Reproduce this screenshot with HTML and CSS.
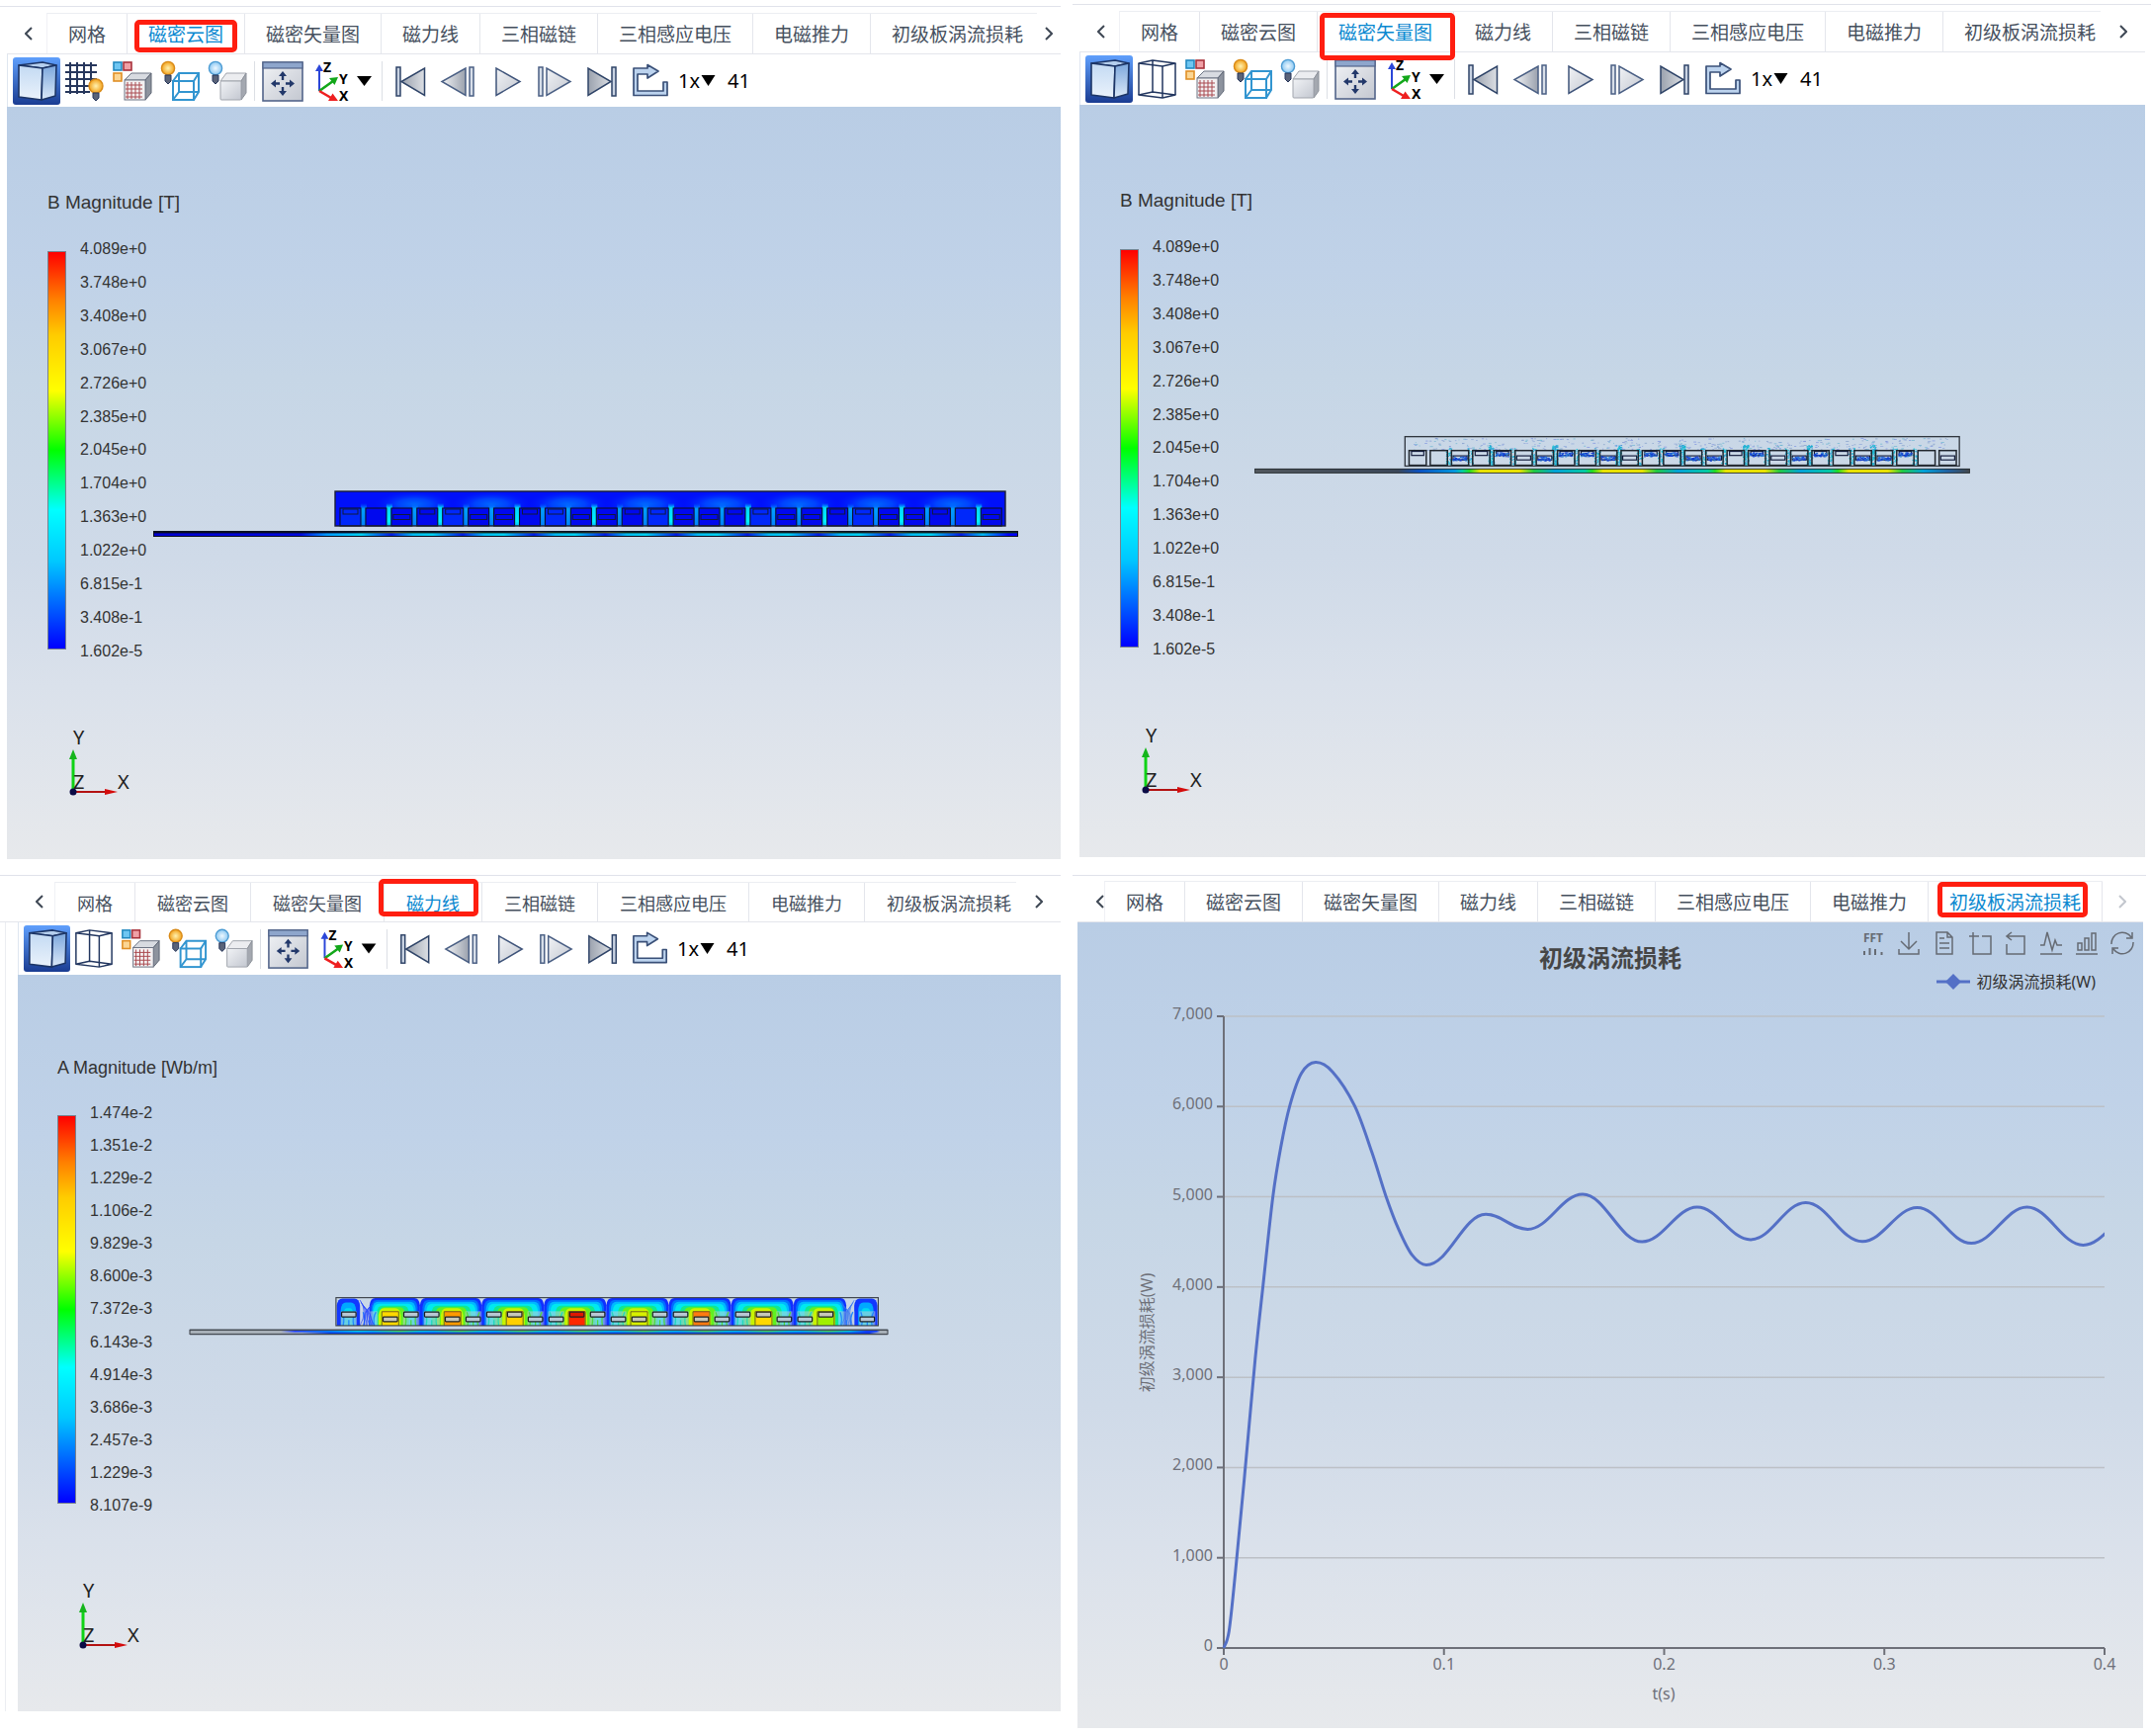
FILE: index.html
```html
<!DOCTYPE html>
<html lang="zh-CN">
<head>
<meta charset="utf-8">
<meta name="viewport" content="width=device-width, initial-scale=1">
<title>电磁仿真结果</title>
<link rel="stylesheet" href="styles.css">
</head>
<body>
<svg class="sprite" aria-hidden="true">
  <defs>
    <linearGradient id="face" x1="0" y1="0" x2="0" y2="1"><stop offset="0" stop-color="#c3daf3"/><stop offset="1" stop-color="#eaf2fb"/></linearGradient>
    <linearGradient id="side" x1="0" y1="0" x2="0" y2="1"><stop offset="0" stop-color="#7ba6dc"/><stop offset="1" stop-color="#dbe9f8"/></linearGradient>
    <linearGradient id="gray" x1="0" y1="0" x2="1" y2="1"><stop offset="0" stop-color="#f1f3f6"/><stop offset="1" stop-color="#c3c7d0"/></linearGradient>
    <linearGradient id="steel" x1="0" y1="0" x2="1" y2="0"><stop offset="0" stop-color="#f4f5f7"/><stop offset="1" stop-color="#9aa1ad"/></linearGradient>
    <linearGradient id="steel-r" x1="0" y1="0" x2="1" y2="0"><stop offset="0" stop-color="#9aa1ad"/><stop offset="1" stop-color="#dcdfe4"/></linearGradient>
    <radialGradient id="amber"><stop offset="0" stop-color="#fff2b0"/><stop offset="1" stop-color="#f2a21c"/></radialGradient>
    <radialGradient id="azure"><stop offset="0" stop-color="#eef8ff"/><stop offset="1" stop-color="#8cc8f2"/></radialGradient>
  </defs>
  <symbol id="i-solid" viewBox="0 0 48 48">
    <g stroke="#1c3566" stroke-width="1.6" stroke-linejoin="round">
      <path d="M6 8 30 5 44 8 30 11Z" fill="#b5cfee"/>
      <path d="M6 8 30 11 29 43 6 40Z" fill="url(#face)"/>
      <path d="M30 11 44 8 43 39 29 43Z" fill="url(#side)"/>
    </g>
  </symbol>
  <symbol id="i-frame" viewBox="0 0 48 48">
    <g fill="none" stroke="#22365f" stroke-width="1.5" stroke-linejoin="round">
      <path d="M6 8 20 5 43 8 30 11Z"/><path d="M6 40 20 37 43 40 30 43Z"/>
      <path d="M6 8V40M20 5V37M43 8V40M30 11V43"/>
    </g>
  </symbol>
  <symbol id="i-grid" viewBox="0 0 48 48">
    <path d="M10 5V37M17 5V37M24 5V37M31 5V31M5 8H37M5 15H37M5 22H37M5 29H31M5 35H30" fill="none" stroke="#27375c" stroke-width="2"/>
    <circle cx="36" cy="29" r="7" fill="url(#amber)" stroke="#d98a17" stroke-width="1.4"/>
    <path d="M33 36H39V41L36 44 33 41Z" fill="#5a6378" stroke="#27375c"/>
  </symbol>
  <symbol id="i-mesh" viewBox="0 0 48 48">
    <rect x="6" y="5" width="8" height="8" fill="#6fc6f2" stroke="#2389c0" stroke-width="1.6"/>
    <rect x="16" y="5" width="8" height="8" fill="#f0a0a6" stroke="#a8333c" stroke-width="1.6"/>
    <rect x="6" y="16" width="8" height="8" fill="#fbd694" stroke="#e08f26" stroke-width="1.6"/>
    <path d="M17 23 24 16H44L38 23Z" fill="#d8dbe1" stroke="#6c7484"/>
    <path d="M38 23 44 16V36L38 43Z" fill="#8d939e" stroke="#5e6675"/>
    <rect x="17" y="23" width="21" height="20" fill="#f3f0f1" stroke="#6c7484"/>
    <path d="M20 25V42M24 25V42M28 25V42M32 25V42M18 28H35M18 32H35M18 36H35M18 40H35" stroke="#a94a50" fill="none"/>
  </symbol>
  <symbol id="i-edges" viewBox="0 0 48 48">
    <circle cx="13" cy="11" r="6.6" fill="url(#amber)" stroke="#d98a17" stroke-width="1.4"/>
    <path d="M10 18H16V24L13 27 10 24Z" fill="#5a6378" stroke="#27375c"/>
    <g fill="none" stroke="#3295d0" stroke-width="2"><rect x="18" y="24" width="21" height="19"/><path d="M18 24 24 16H44V35L39 43M39 24 44 16M24 16V35H44M24 35 18 43"/></g>
  </symbol>
  <symbol id="i-box" viewBox="0 0 48 48">
    <circle cx="13" cy="11" r="6.6" fill="url(#azure)" stroke="#4b9bd3" stroke-width="1.4"/>
    <path d="M10 18H16V24L13 27 10 24Z" fill="#5a6378" stroke="#27375c"/>
    <path d="M18 24 24 16H44L39 24Z" fill="#ecedf0" stroke="#a0a4ac"/>
    <path d="M39 24 44 16V36L39 43Z" fill="#a4a8b0" stroke="#8d929b"/>
    <rect x="18" y="24" width="21" height="19" rx="1" fill="url(#gray)" stroke="#a0a4ac"/>
  </symbol>
  <symbol id="i-fit" viewBox="0 0 48 48">
    <rect x="4" y="5" width="40" height="39" fill="url(#gray)" stroke="#53658a" stroke-width="1.6"/>
    <rect x="4" y="5" width="40" height="6" fill="#8ea6cc" stroke="#53658a" stroke-width="1.2"/>
    <path d="M24 14 28 19H25.200V23H22.800V19H20ZM24 39 28 34H25.200V30H22.800V34H20ZM12 26.500 17 22.500V25.300H21V27.700H17V30.500ZM36 26.500 31 22.500V25.300H27V27.700H31V30.500Z" fill="#22386a"/>
  </symbol>
  <symbol id="i-axes" viewBox="0 0 72 48">
    <path d="M13 34V12" stroke="#2b46d8" stroke-width="2"/><path d="M9 14 13 7 17 14Z" fill="#2b46d8"/>
    <path d="M13 34 27 24" stroke="#12a71a" stroke-width="2.600"/><path d="M32 20 28.500 28 23 21Z" fill="#12a71a"/>
    <path d="M13 34 25 41" stroke="#ee2020" stroke-width="2.600"/><path d="M32 44 22 44 26.500 36.500Z" fill="#ee2020"/>
    <path d="M51 19H66L58.500 29Z"/>
  </symbol>
  <symbol id="i-first" viewBox="0 0 48 48"><g stroke="#2f4468" stroke-width="1.5"><rect x="10" y="10" width="4" height="29" fill="#c9d3e2"/><path d="M38.500 11V38.500L15 24.500Z" fill="url(#steel-r)"/></g></symbol>
  <symbol id="i-prev" viewBox="0 0 48 48"><g stroke="#4a5f84" stroke-width="1.5"><path d="M31 11V38.500L7 24.500Z" fill="url(#steel)"/><rect x="35" y="10" width="4" height="29" fill="#d8dfe9"/></g></symbol>
  <symbol id="i-play" viewBox="0 0 48 48"><path d="M13 11V38.500L37 24.500Z" fill="url(#gray)" stroke="#3f547a" stroke-width="1.5"/></symbol>
  <symbol id="i-next" viewBox="0 0 48 48"><g stroke="#4a5f84" stroke-width="1.5"><rect x="7" y="10" width="4" height="29" fill="#d8dfe9"/><path d="M15 11V38.500L39 24.500Z" fill="url(#gray)"/></g></symbol>
  <symbol id="i-last" viewBox="0 0 48 48"><g stroke="#2f4468" stroke-width="1.500"><path d="M8 11V38.500L31 24.500Z" fill="url(#steel-r)"/><rect x="32" y="10" width="4" height="29" fill="#c9d3e2"/></g></symbol>
  <symbol id="i-loop" viewBox="0 0 48 48"><path d="M19 11V7.500L30 14 19 21V17H9V34H35V25H39V38.500H5V11Z" fill="#bcd3ee" stroke="#3a5078" stroke-width="1.700" stroke-linejoin="round"/></symbol>

  <symbol id="t-save" viewBox="0 0 24 24"><path d="M12 1V18M4 10 12 18 20 10M2 18V23H22V18"/></symbol>
  <symbol id="t-data" viewBox="0 0 24 24"><path d="M4 1H15L20 6V23H4ZM15 1V6H20M7 7H12M7 12H17M7 17H17"/></symbol>
  <symbol id="t-zoom" viewBox="0 0 24 24"><path d="M1 5H11M5 1V23H23V5H14"/></symbol>
  <symbol id="t-back" viewBox="0 0 24 24"><path d="M8 1 3 5 8 9M3 5H21V23H3V13"/></symbol>
  <symbol id="t-line" viewBox="0 0 24 24"><path d="M1 14H5L8 1 13 19 16 9 18 14H23M1 23H23"/></symbol>
  <symbol id="t-bar" viewBox="0 0 24 24"><path d="M3 12H7V19H3ZM10 7H14V19H10ZM17 2H21V19H17ZM1 23H23"/></symbol>
  <symbol id="t-reset" viewBox="0 0 24 24"><path d="M1 13A11 11 0 0 1 21 6M22 1V7H16M23 11A11 11 0 0 1 3 18M2 23V17H8"/></symbol>

  <symbol id="i-triad" viewBox="0 0 80 80">
    <path d="M15 69V34" stroke="#0fd316" stroke-width="3"/><path d="M11 36 15 26 19 36Z" fill="#15b51c"/>
    <path d="M15 69H50" stroke="#b31212" stroke-width="2"/><path d="M47 66 60 69 47 72Z" fill="#d40c0c"/>
    <circle cx="15" cy="69" r="3.500" fill="#0b0b46"/>
  </symbol>
</svg>

<main class="board">
  <section class="panel panel-cloud">
    <nav class="tabs">
      <button class="scroll prev" aria-label="向左"><svg viewBox="0 0 8 14"><path d="M7 1 1 7 7 13"/></svg></button>
      <div class="tab-list">
        <button class="tab">网格</button><button class="tab active">磁密云图<span class="mark"></span></button><button class="tab">磁密矢量图</button><button class="tab">磁力线</button><button class="tab">三相磁链</button><button class="tab">三相感应电压</button><button class="tab">电磁推力</button><button class="tab">初级板涡流损耗</button>
      </div>
      <button class="scroll next" aria-label="向右"><svg viewBox="0 0 8 14"><path d="M1 1 7 7 1 13"/></svg></button>
    </nav>
    <div class="toolbar">
      <button class="tool on" aria-label="实体"><svg><use href="#i-solid"/></svg></button>
      <button class="tool" aria-label="网格显示"><svg><use href="#i-grid"/></svg></button>
      <button class="tool" aria-label="网格着色"><svg><use href="#i-mesh"/></svg></button>
      <button class="tool" aria-label="显示边线"><svg><use href="#i-edges"/></svg></button>
      <button class="tool" aria-label="显示实体"><svg><use href="#i-box"/></svg></button>
      <span class="rule"></span>
      <button class="tool" aria-label="适应窗口"><svg><use href="#i-fit"/></svg></button>
      <button class="tool wide" aria-label="视图方向"><svg class="axes" viewBox="0 0 72 48"><use href="#i-axes"/><text x="17" y="15">Z</text><text x="33" y="27">Y</text><text x="33" y="44">X</text></svg></button>
      <span class="rule"></span>
      <div class="player">
        <button class="tool" aria-label="第一帧"><svg><use href="#i-first"/></svg></button>
        <button class="tool" aria-label="上一帧"><svg><use href="#i-prev"/></svg></button>
        <button class="tool" aria-label="播放"><svg><use href="#i-play"/></svg></button>
        <button class="tool" aria-label="下一帧"><svg><use href="#i-next"/></svg></button>
        <button class="tool" aria-label="最后一帧"><svg><use href="#i-last"/></svg></button>
        <button class="tool" aria-label="循环"><svg><use href="#i-loop"/></svg></button>
      </div>
      <label class="speed"><select aria-label="速度"><option>1x</option></select><svg viewBox="0 0 14 11"><path d="M0 0H14L7 11Z"/></svg></label>
      <output class="frame">41</output>
    </div>
    <div class="stage">
      <h2 class="quantity">B Magnitude [T]</h2>
      <div class="legend">
        <div class="ramp"></div>
        <ol class="levels"><li>4.089e+0</li><li>3.748e+0</li><li>3.408e+0</li><li>3.067e+0</li><li>2.726e+0</li><li>2.385e+0</li><li>2.045e+0</li><li>1.704e+0</li><li>1.363e+0</li><li>1.022e+0</li><li>6.815e-1</li><li>3.408e-1</li><li>1.602e-5</li></ol>
      </div>
      <svg class="model" data-kind="cloud" viewBox="0 -1 875 50"></svg>
      <svg class="triad" viewBox="0 0 80 80"><use href="#i-triad"/><text x="15" y="21">Y</text><text x="15" y="66">Z</text><text x="60" y="66">X</text></svg>
    </div>
  </section>

  <section class="panel panel-vector">
    <nav class="tabs">
      <button class="scroll prev" aria-label="向左"><svg viewBox="0 0 8 14"><path d="M7 1 1 7 7 13"/></svg></button>
      <div class="tab-list">
        <button class="tab">网格</button><button class="tab">磁密云图</button><button class="tab active">磁密矢量图<span class="mark"></span></button><button class="tab">磁力线</button><button class="tab">三相磁链</button><button class="tab">三相感应电压</button><button class="tab">电磁推力</button><button class="tab">初级板涡流损耗</button>
      </div>
      <button class="scroll next" aria-label="向右"><svg viewBox="0 0 8 14"><path d="M1 1 7 7 1 13"/></svg></button>
    </nav>
    <div class="toolbar">
      <button class="tool on" aria-label="实体"><svg><use href="#i-solid"/></svg></button>
      <button class="tool" aria-label="线框"><svg><use href="#i-frame"/></svg></button>
      <button class="tool" aria-label="网格着色"><svg><use href="#i-mesh"/></svg></button>
      <button class="tool" aria-label="显示边线"><svg><use href="#i-edges"/></svg></button>
      <button class="tool" aria-label="显示实体"><svg><use href="#i-box"/></svg></button>
      <span class="rule"></span>
      <button class="tool" aria-label="适应窗口"><svg><use href="#i-fit"/></svg></button>
      <button class="tool wide" aria-label="视图方向"><svg class="axes" viewBox="0 0 72 48"><use href="#i-axes"/><text x="17" y="15">Z</text><text x="33" y="27">Y</text><text x="33" y="44">X</text></svg></button>
      <span class="rule"></span>
      <div class="player">
        <button class="tool" aria-label="第一帧"><svg><use href="#i-first"/></svg></button>
        <button class="tool" aria-label="上一帧"><svg><use href="#i-prev"/></svg></button>
        <button class="tool" aria-label="播放"><svg><use href="#i-play"/></svg></button>
        <button class="tool" aria-label="下一帧"><svg><use href="#i-next"/></svg></button>
        <button class="tool" aria-label="最后一帧"><svg><use href="#i-last"/></svg></button>
        <button class="tool" aria-label="循环"><svg><use href="#i-loop"/></svg></button>
      </div>
      <label class="speed"><select aria-label="速度"><option>1x</option></select><svg viewBox="0 0 14 11"><path d="M0 0H14L7 11Z"/></svg></label>
      <output class="frame">41</output>
    </div>
    <div class="stage">
      <h2 class="quantity">B Magnitude [T]</h2>
      <div class="legend">
        <div class="ramp"></div>
        <ol class="levels"><li>4.089e+0</li><li>3.748e+0</li><li>3.408e+0</li><li>3.067e+0</li><li>2.726e+0</li><li>2.385e+0</li><li>2.045e+0</li><li>1.704e+0</li><li>1.363e+0</li><li>1.022e+0</li><li>6.815e-1</li><li>3.408e-1</li><li>1.602e-5</li></ol>
      </div>
      <svg class="model" data-kind="vector" viewBox="0 -1 875 50"></svg>
      <svg class="triad" viewBox="0 0 80 80"><use href="#i-triad"/><text x="15" y="21">Y</text><text x="15" y="66">Z</text><text x="60" y="66">X</text></svg>
    </div>
  </section>

  <section class="panel panel-lines">
    <nav class="tabs">
      <button class="scroll prev" aria-label="向左"><svg viewBox="0 0 8 14"><path d="M7 1 1 7 7 13"/></svg></button>
      <div class="tab-list">
        <button class="tab">网格</button><button class="tab">磁密云图</button><button class="tab">磁密矢量图</button><button class="tab active">磁力线<span class="mark"></span></button><button class="tab">三相磁链</button><button class="tab">三相感应电压</button><button class="tab">电磁推力</button><button class="tab">初级板涡流损耗</button>
      </div>
      <button class="scroll next" aria-label="向右"><svg viewBox="0 0 8 14"><path d="M1 1 7 7 1 13"/></svg></button>
    </nav>
    <div class="framed">
      <div class="toolbar">
        <button class="tool on" aria-label="实体"><svg><use href="#i-solid"/></svg></button>
        <button class="tool" aria-label="线框"><svg><use href="#i-frame"/></svg></button>
        <button class="tool" aria-label="网格着色"><svg><use href="#i-mesh"/></svg></button>
        <button class="tool" aria-label="显示边线"><svg><use href="#i-edges"/></svg></button>
        <button class="tool" aria-label="显示实体"><svg><use href="#i-box"/></svg></button>
        <span class="rule"></span>
        <button class="tool" aria-label="适应窗口"><svg><use href="#i-fit"/></svg></button>
        <button class="tool wide" aria-label="视图方向"><svg class="axes" viewBox="0 0 72 48"><use href="#i-axes"/><text x="17" y="15">Z</text><text x="33" y="27">Y</text><text x="33" y="44">X</text></svg></button>
        <span class="rule"></span>
        <div class="player">
          <button class="tool" aria-label="第一帧"><svg><use href="#i-first"/></svg></button>
          <button class="tool" aria-label="上一帧"><svg><use href="#i-prev"/></svg></button>
          <button class="tool" aria-label="播放"><svg><use href="#i-play"/></svg></button>
          <button class="tool" aria-label="下一帧"><svg><use href="#i-next"/></svg></button>
          <button class="tool" aria-label="最后一帧"><svg><use href="#i-last"/></svg></button>
          <button class="tool" aria-label="循环"><svg><use href="#i-loop"/></svg></button>
        </div>
        <label class="speed"><select aria-label="速度"><option>1x</option></select><svg viewBox="0 0 14 11"><path d="M0 0H14L7 11Z"/></svg></label>
        <output class="frame">41</output>
      </div>
      <div class="stage">
        <h2 class="quantity">A Magnitude [Wb/m]</h2>
        <div class="legend">
          <div class="ramp"></div>
          <ol class="levels"><li>1.474e-2</li><li>1.351e-2</li><li>1.229e-2</li><li>1.106e-2</li><li>9.829e-3</li><li>8.600e-3</li><li>7.372e-3</li><li>6.143e-3</li><li>4.914e-3</li><li>3.686e-3</li><li>2.457e-3</li><li>1.229e-3</li><li>8.107e-9</li></ol>
        </div>
        <svg class="model" data-kind="lines" viewBox="0 -1 875 50"></svg>
        <svg class="triad" viewBox="0 0 80 80"><use href="#i-triad"/><text x="15" y="21">Y</text><text x="15" y="66">Z</text><text x="60" y="66">X</text></svg>
      </div>
    </div>
  </section>

  <section class="panel panel-loss">
    <nav class="tabs">
      <button class="scroll prev" aria-label="向左"><svg viewBox="0 0 8 14"><path d="M7 1 1 7 7 13"/></svg></button>
      <div class="tab-list">
        <button class="tab">网格</button><button class="tab">磁密云图</button><button class="tab">磁密矢量图</button><button class="tab">磁力线</button><button class="tab">三相磁链</button><button class="tab">三相感应电压</button><button class="tab">电磁推力</button><button class="tab active">初级板涡流损耗<span class="mark"></span></button>
      </div>
      <button class="scroll next" aria-label="向右" disabled><svg viewBox="0 0 8 14"><path d="M1 1 7 7 1 13"/></svg></button>
    </nav>
    <div class="chart">
      <header class="chart-head">
        <h2 class="chart-title">初级涡流损耗</h2>
        <div class="chart-side">
          <div class="toolbox">
            <button class="fft"><span>FFT</span><svg viewBox="0 0 24 8" aria-hidden="true"><path d="M3 8V4M8.500 8V1M14 8V2M20.500 8V5" stroke-width="2"/></svg></button>
            <button aria-label="保存"><svg><use href="#t-save"/></svg></button>
            <button aria-label="数据"><svg><use href="#t-data"/></svg></button>
            <button aria-label="区域缩放"><svg><use href="#t-zoom"/></svg></button>
            <button aria-label="缩放还原"><svg><use href="#t-back"/></svg></button>
            <button aria-label="折线图"><svg><use href="#t-line"/></svg></button>
            <button aria-label="柱状图"><svg><use href="#t-bar"/></svg></button>
            <button aria-label="还原"><svg><use href="#t-reset"/></svg></button>
          </div>
          <div class="series"><svg viewBox="0 0 34 16"><path d="M0 8H34" stroke="#5470c6" stroke-width="3"/><path d="M17 0 25 8 17 16 9 8Z" fill="#5470c6"/></svg>初级涡流损耗(W)</div>
        </div>
      </header>
      <svg class="plot" viewBox="0 80 1078 735"></svg>
    </div>
  </section>
</main>
<script src="app.js"></script>
</body>
</html>
```

FILE: styles.css
```css
* { box-sizing: border-box; }

body {
  margin: 0;
  background: #fff;
  font-family: "Noto Sans", "Noto Sans CJK SC", sans-serif;
  color: #46505e;
}

button, select { font: inherit; color: inherit; background: none; border: 0; padding: 0; margin: 0; }
h2, ol { margin: 0; padding: 0; list-style: none; }
.sprite { position: absolute; width: 0; height: 0; }

.board {
  display: grid;
  grid-template-columns: minmax(0, 1073fr) minmax(0, 1091fr);
  column-gap: 12px;
  row-gap: 16px;
  align-items: start;
}

.panel {
  --tab-size: 19px;
  --tool: 48px;
  --scale-height: 427px;
  border-top: 1px solid #e0e2ea;
  padding: 6px 0 0 7px;
  margin-top: 6px;
}
.panel-vector { margin-top: 4px; padding: 6px 6px 0 7px; }
.panel-lines { --tab-size: 18px; --tool: 47px; --scale-height: 417px; margin-top: 0; padding: 6px 0 0; }
.panel-loss { margin: 0 5px 0 0; padding: 5px 3px 0 5px; }

/* tabs */
.tabs { display: flex; height: 42px; border-bottom: 1px solid #e4e6ec; }
.tab-list { display: flex; flex: 1; min-width: 0; border-top: 1px solid #eceef2; border-left: 1px solid #f0f1f5; }
.tab {
  position: relative;
  flex: none;
  padding: 0 21px;
  border-right: 1px solid #e4e6ec;
  font-family: "Noto Sans CJK SC", sans-serif;
  font-size: var(--tab-size);
  line-height: 40px;
  white-space: nowrap;
}
.tab:last-child { flex: 0 1 auto; min-width: 0; border-right-color: transparent; padding-right: 0; }
.tab.active { color: #0a88d0; }
.mark { position: absolute; inset: 6px 7px 1px 7px; border: 5px solid #ff1e10; border-radius: 5px; }
.panel-cloud .tab { line-height: 38px; }
.panel-vector .mark { inset: 1px -2px -9px 2px; z-index: 1; }
.panel-lines .mark { inset: -4px 3px 5px -6px; }
.panel-loss .mark { inset: 0 14px 4px 9px; }
.panel-lines .tabs { padding-left: 18px; height: 41px; }
.panel-lines .tab { line-height: 38px; padding-left: 22px; padding-right: 22px; }
.panel-loss .tab.active { padding-right: 21px; border-right-color: #e4e6ec; }
.panel-loss .tab-list { flex: 0 1 auto; }

.scroll { display: grid; place-items: center; flex: none; width: 40px; }
.scroll svg { width: 8px; height: 14px; fill: none; stroke: #3f4855; stroke-width: 2; }
.scroll.prev { padding-left: 4px; }
.panel-cloud .next { width: 24px; }
.panel-vector .next, .panel-lines .next { width: 45px; }
.panel-lines .prev { width: 37px; padding-left: 6px; }
.panel-loss .prev { width: 27px; justify-items: end; }
.scroll:disabled svg { stroke: #c3c7ce; }

/* view toolbar */
.toolbar { display: flex; align-items: center; height: 53px; padding-left: 5px; border-left: 1px solid #dfe6f0; }
.tool { flex: none; width: var(--tool); height: var(--tool); border-radius: 3px; }
.tool svg { display: block; width: 100%; height: 100%; }
.tool.wide { width: 72px; }
.tool.on { background: linear-gradient(#5f9ffc, #1a3c92); }
.rule { width: 1px; height: 40px; margin: 0 4px; background: #dcdfe5; }
.player { display: flex; gap: 1px; }
.axes text { font: bold 14px "Noto Sans", sans-serif; }
.speed { display: flex; align-items: center; margin-left: 2px; color: #000; font-size: 20px; }
.speed select { appearance: none; width: 23px; }
.speed svg { width: 15px; height: 11px; }
.frame { margin-left: 12px; font-size: 20px; color: #000; }

/* 3D view */
.stage, .chart {
  background: linear-gradient(#b9cde5, #c0d2e8 22%, #c6d6e6 36%, #cfdae8 60%, #dae1eb 77%, #e7e9ec);
}
.stage {
  display: grid;
  grid-template-columns: 107px minmax(0, 1fr);
  padding: 85px 0 57px 41px;
}
.framed { margin-left: 5px; padding-left: 12px; border-left: 1px solid #eceef2; }
.quantity { grid-column: 1 / -1; margin-bottom: 25px; font: 19px/24px "Liberation Sans", sans-serif; color: #333; }
.panel-lines .quantity { font-size: 18px; margin-bottom: 24px; }
.panel-lines .stage { padding: 82px 0 56px 40px; }
.legend { display: flex; gap: 14px; height: var(--scale-height); }
.ramp {
  width: 19px;
  margin: 12px 0;
  border: 1px solid #77808e;
  background: linear-gradient(#f00, #ff8000 12%, #fc0 21%, #ff0 35%, #0f0 50%, #0ff 65%, #00c8ff 78%, #00f);
}
.levels {
  display: flex;
  flex-direction: column;
  justify-content: space-between;
  font: 16px/20px "Liberation Sans", sans-serif;
  color: #333;
}
.model { display: block; width: 100%; padding: 253px 43px 0 0; overflow: visible; }
.panel-vector .model { padding: 200px 177px 0 29px; }
.panel-lines .model { padding: 195px 174px 0 26px; }
.triad { grid-column: 1; width: 80px; height: 80px; margin: 63px 0 0 11px; }
.panel-lines .triad { margin-top: 62px; }
.triad text { font: 20px "Noto Sans", sans-serif; fill: #222; }

/* loss chart */
.chart-head { display: grid; grid-template-columns: 1fr auto 1fr; height: 80px; }
.chart-title { grid-column: 2; margin-top: 17px; font: bold 24px/36px "Noto Sans CJK SC", sans-serif; color: #464646; }
.chart-side { display: flex; flex-direction: column; align-items: flex-end; gap: 15px; padding: 9px 3px 0 0; }
.toolbox { display: flex; color: #666b73; }
.toolbox button { display: grid; place-items: center; width: 36px; height: 24px; }
.toolbox svg { width: 24px; height: 24px; fill: none; stroke: currentColor; stroke-width: 1.5; }
.toolbox .fft { align-content: space-between; font: bold 12px/14px "Noto Sans", sans-serif; }
.toolbox .fft svg { height: 8px; }
.series { display: flex; align-items: center; gap: 7px; margin-right: 45px; font-size: 16px; line-height: 24px; color: #333; }
.series svg { width: 34px; height: 16px; }
.plot { display: block; width: 100%; font-size: 16px; fill: #6e7079; }
.plot .grid { stroke: #bcc0c6; stroke-width: 1.5; }
.plot .axis { stroke: #6e7079; stroke-width: 2; }
.plot .curve { fill: none; stroke: #5470c6; stroke-width: 3; stroke-linejoin: round; }
```

FILE: app.js
```js
const NS = 'http://www.w3.org/2000/svg';
const add = (parent, name, attrs, text) => {
  const el = document.createElementNS(NS, name);
  for (const k in attrs) el.setAttribute(k, attrs[k]);
  if (text !== undefined) el.textContent = text;
  parent.appendChild(el);
  return el;
};

// repeatable noise for the field arrows
let seed = 7;
const rnd = () => (seed = (seed * 16807) % 2147483647) / 2147483647;

// Coil position in each of the 26 slots: t = upper, m = lower, n = empty
const COILS = 'tnmttmmttmmttmmttmmttmmtnm';
const PITCH = 25.93;
const slotX = i => 189 + PITCH * i;

function gradient(svg, id, stops, vertical) {
  const g = add(svg, 'linearGradient', { id, x1: 0, y1: 0, x2: vertical ? 0 : 1, y2: vertical ? 1 : 0 });
  stops.forEach(([o, c, a = 1]) => add(g, 'stop', { offset: o, 'stop-color': c, 'stop-opacity': a }));
}

function slots(svg, style, coilWidth = 1) {
  [...COILS].forEach((c, i) => {
    const x = slotX(i);
    add(svg, 'rect', { x, y: 18, width: 21, height: 18, ...style(i) });
    if (c !== 'n') add(svg, 'rect', {
      x: x + (c === 't' ? 3 : 2), y: c === 't' ? 19 : 24.5,
      width: c === 't' ? 15 : 17, height: 5, fill: 'none', stroke: '#111a3a', 'stroke-width': coilWidth
    });
  });
}

function cloud(svg) {
  gradient(svg, 'tooth-hi', [[0, '#0af', 0], [.2, '#00d8ff'], [.8, '#00f0ff'], [1, '#0bf']], true);
  gradient(svg, 'tooth-lo', [[0, '#05f', 0], [.25, '#00a0ff'], [1, '#0080ff']], true);
  const glow = add(svg, 'radialGradient', { id: 'yoke' });
  add(glow, 'stop', { offset: 0, 'stop-color': '#0068ff' });
  add(glow, 'stop', { offset: .4, 'stop-color': '#0050ff', 'stop-opacity': .8 });
  add(glow, 'stop', { offset: 1, 'stop-color': '#0010ff', 'stop-opacity': 0 });
  add(svg, 'rect', { x: 184, y: 1, width: 678, height: 35, fill: '#0010fa' });
  for (let i = 2.9; i < 25; i += 3) add(svg, 'ellipse', { cx: slotX(i), cy: 14, rx: 42, ry: 14, fill: 'url(#yoke)' });
  for (let i = 1; i < 26; i++) {
    const hot = i % 3 === 1 && i > 1 || i === 2;
    add(svg, 'rect', { x: slotX(i) - 5, y: 13, width: 6, height: 23, fill: hot ? 'url(#tooth-hi)' : 'url(#tooth-lo)' });
  }
  slots(svg, i => ({ fill: i % 4 === 0 ? '#0028fa' : '#0008ee', stroke: '#0a1030', 'stroke-width': 1.1 }));
  add(svg, 'rect', { x: 184, y: 1, width: 678, height: 35, fill: 'none', stroke: '#1a1f33', 'stroke-width': 1.4 });
  const top = [[0, '#0a0a20'], [.23, '#0a1030']], low = [[0, '#0000d0'], [.17, '#0008e0'], [.2, '#09f']];
  for (let k = 0; k < 9; k++) {
    const o = .24 + k * .0825;
    top.push([o, '#10262a'], [o + .04, '#6b6a12'], [o + .06, '#10401e']);
    low.push([o, '#00d0f0'], [o + .035, '#0018e0'], [o + .06, '#00b8f0']);
  }
  low.push([.99, '#0000ff']);
  gradient(svg, 'plate-top', top);
  gradient(svg, 'plate-low', low);
  add(svg, 'rect', { x: 0, y: 41, width: 875, height: 6, fill: '#0a1020' });
  add(svg, 'rect', { x: 1, y: 42.4, width: 873, height: 1.4, fill: 'url(#plate-top)' });
  add(svg, 'rect', { x: 1, y: 43.4, width: 873, height: 2.6, fill: 'url(#plate-low)' });
}

function vector(svg) {
  const dot = (x, y, w, fill, h = 1) => add(svg, 'rect', { x, y, width: w, height: h, fill });
  for (let i = 0; i < 420; i++) {
    const y = 3 + rnd() * 15;
    dot(194 + rnd() * 655, y, 1 + rnd() * 3, ['#8aa4d8', '#7f9bc8', '#7a8fe0', '#69b4d0'][i % 4], .8);
  }
  for (let i = 2; i < 25; i++) {
    const hot = i % 3 === 1;
    for (let k = 0; k < (hot ? 110 : 44); k++)
      dot(slotX(i) - 7 + rnd() * 7, (hot ? 11 : 15) + rnd() * (hot ? 25 : 21), 1.6, ['#12b4cc', '#25c5d8', '#3a9fd8'][k % 3], 1.3);
  }
  slots(svg, () => ({ fill: 'none', stroke: '#20262e', 'stroke-width': 1.8 }), 1.4);
  [...COILS].forEach((c, i) => {
    if (c === 'n' || i % 5 === 0 || i % 7 === 3) return;
    for (let k = 0; k < 40; k++) dot(slotX(i) + 1 + rnd() * 16, (c === 't' ? 20 : 25) + rnd() * 5, 2.4, k % 3 ? '#1440d0' : '#2a7fd8', 1.2);
  });
  add(svg, 'rect', { x: 184, y: 1, width: 678, height: 36, fill: 'none', stroke: '#30363e', 'stroke-width': 1.6 });
  const st = [[0, '#50565c'], [.2, '#3a4658'], [.23, '#0a50c0'], [.28, '#0096dc']];
  for (let k = 0; k < 4; k++) {
    const o = .29 + k * .172;
    st.push([o, '#00c8a0'], [o + .01, '#20d820'], [o + .025, '#e8e000'], [o + .08, '#e8e000'], [o + .1, '#20c840'], [o + .13, '#00a0d8']);
  }
  st.push([.97, '#2060a0'], [1, '#42474c']);
  gradient(svg, 'plate-vec', st);
  add(svg, 'rect', { x: 0, y: 40, width: 875, height: 6, fill: '#22282c' });
  add(svg, 'rect', { x: 1, y: 41, width: 873, height: 4, fill: 'url(#plate-vec)' });
}

function lines(svg) {
  // each pole: left edge, right edge, centre, colour of the hottest slot
  const poles = [[226, 289, 251, '#ffd800'], [289, 366, 329, '#ff9a00'], [366, 444, 406, '#ffd000'], [444, 522, 484, '#ff2800'],
    [522, 600, 562, '#d8f000'], [600, 678, 639, '#ff7a10'], [678, 756, 716, '#ffd800'], [756, 822, 794, '#a0f000']];
  const dome = (l, r, t, fill) => {
    const q = Math.min(7, (r - l) / 3);
    add(svg, 'path', { d: `M${l} 36V${t + 9}Q${l + 1} ${t} ${l + q} ${t}H${r - q}Q${r - 1} ${t} ${r} ${t + 9}V36Z`, fill });
  };
  [[185, 214], [832, 861]].forEach(([l, r]) => { dome(l, r, 2, '#1238ff'); dome(l + 5, r - 5, 7, '#00a8ff'); dome(l + 8, r - 8, 14, '#00d8f0'); });
  poles.forEach(([l, r, c]) => {
    const layers = [[0, 1.5, '#1030ff'], [.08, 4, '#0070ff'], [.14, 6, '#00b8ff'], [.2, 8.5, '#00e8f0'], [.36, 11, '#10e890'], [.48, 13, '#60f020']];
    layers.forEach(([k, t, f]) => dome(l + (c - l) * k, r - (r - c) * k, t, f));
    dome(c - 14, c + 14, 14, '#c8f400');
  });
  const hotAt = i => poles.find(p => Math.abs(p[2] - slotX(i) - 11) < 12);
  [...COILS].forEach((c, i) => {
    const x = slotX(i), p = hotAt(i);
    add(svg, 'rect', { x: x + 1, y: 18, width: 20, height: 18, fill: p ? p[3] : '#bccbd8', 'fill-opacity': p ? 1 : .55 });
    if (!p) add(svg, 'path', { d: `M${x + 4} 36Q${x + 6} 26 ${x + 3} 19M${x + 11} 36V29M${x + 17} 36Q${x + 15} 26 ${x + 19} 19`, stroke: i < 3 || i > 22 ? '#2088ff' : i % 3 ? '#20d8c0' : '#50d840', fill: 'none', 'stroke-width': 1.6 });
    if (c === 'n') return;
    const y = c === 't' ? 19 : 25;
    add(svg, 'rect', { x: x + 2, y, width: 18, height: 6, rx: 1, fill: p ? (p[3] === '#ff2800' ? '#e01800' : '#c8c8b8') : '#b8c8d4', stroke: '#1a2024', 'stroke-width': 1.5 });
    if (p) add(svg, 'path', { d: `M${x + .5} 36V18.500H${x + 21.5}V36`, fill: 'none', stroke: '#5a4a20', 'stroke-width': 1 });
  });
  for (let k = 0; k < 5; k++) {
    add(svg, 'path', { d: `M${214 + k} ${4 + k * 2}Q${224 + k} 18 ${214 + k * 4} 36M${232 - k} ${4 + k * 2}Q${220 - k} 18 ${232 - k * 3} 36`, stroke: '#2040ff', 'stroke-width': .8, fill: 'none' });
    add(svg, 'path', { d: `M${814 + k} ${4 + k * 2}Q${826 + k} 18 ${816 + k * 3} 36M${832 - k} ${4 + k * 2}Q${822 - k} 18 ${830 - k * 2} 36`, stroke: '#3070f0', 'stroke-width': .7, fill: 'none' });
  }
  add(svg, 'rect', { x: 184, y: 1, width: 678, height: 35, fill: 'none', stroke: '#3a4048', 'stroke-width': 1.4 });
  const st = [[0, '#a8b0b8'], [.13, '#a8b0b8'], [.15, '#2040ff'], [.2, '#0080ff'], [.24, '#00c8e8']];
  for (let k = 0; k < 8; k++) { const o = .26 + k * .088; st.push([o, '#00b0f0'], [o + .04, '#40d060'], [o + .07, '#00c0e0']); }
  st.push([.97, '#1040ff'], [.985, '#1040ff'], [.99, '#a8b0b8']);
  gradient(svg, 'plate-line', st);
  gradient(svg, 'plate-base', [[0, '#a8b0b8'], [.16, '#a8b0b8'], [.2, '#0a30e0'], [.975, '#0a30e0'], [.985, '#a8b0b8']]);
  add(svg, 'rect', { x: .5, y: 40.5, width: 874, height: 7, rx: 1, fill: '#444a52' });
  add(svg, 'rect', { x: 2, y: 42.2, width: 871, height: 3.5, fill: 'url(#plate-line)' });
  add(svg, 'rect', { x: 2, y: 44.2, width: 871, height: 1.5, fill: 'url(#plate-base)' });
}

const draw = { cloud, vector, lines };
document.querySelectorAll('.model').forEach(svg => draw[svg.dataset.kind](svg));

// Loss curve, time in s and loss in W: samples of the start-up, then the turning points of the ripple
const START = [[0, 0], [.0024, 190], [.0052, 820], [.0093, 1870], [.0143, 3210], [.0179, 4030], [.0223, 5000], [.0259, 5550], [.03, 6010],
  [.0353, 6370], [.0417, 6490], [.0494, 6385], [.0594, 6010], [.0673, 5490], [.0736, 5010], [.0794, 4640], [.0855, 4355], [.092, 4245]];
const RIPPLE = [[.119, 4805], [.138, 4640], [.163, 5028], [.19, 4502], [.215, 4885], [.2393, 4525], [.2643, 4935],
  [.29, 4505], [.3149, 4880], [.3395, 4485], [.3648, 4885], [.3903, 4465], [.416, 4860]];

const plot = document.querySelector('.plot');
const px = t => 148 + t * 891 / .4;
const py = w => 734 - w * 639 / 7000;
for (let w = 0; w <= 7000; w += 1000) {
  const y = py(w);
  if (w) add(plot, 'line', { class: 'grid', x1: 148, x2: 1039, y1: y, y2: y });
  add(plot, 'line', { class: 'axis', x1: 141, x2: 148, y1: y, y2: y });
  add(plot, 'text', { x: 137, y: y + 3, 'text-anchor': 'end' }, w.toLocaleString('en-US'));
}
[0, .1, .2, .3, .4].forEach(t => {
  add(plot, 'line', { class: 'axis', x1: px(t), x2: px(t), y1: 734, y2: 741 });
  add(plot, 'text', { x: px(t), y: 756, 'text-anchor': 'middle' }, t);
});
add(plot, 'path', { class: 'axis', fill: 'none', d: 'M148 95V734H1039' });
add(plot, 'text', { x: 593, y: 786, 'text-anchor': 'middle' }, 't(s)');
add(plot, 'text', { transform: 'translate(76 415) rotate(-90)', 'text-anchor': 'middle' }, '初级涡流损耗(W)');

const pts = START.map(([t, w]) => [px(t), py(w)]);
let d = `M${pts[0]}`;
for (let i = 0; i < pts.length - 1; i++) {
  const a = pts[Math.max(i - 1, 0)], b = pts[i], c = pts[i + 1];
  const e = pts[i + 2] || [2 * c[0] - b[0], b[1]];
  d += `C${b[0] + (c[0] - a[0]) / 6} ${b[1] + (c[1] - a[1]) / 6} ${c[0] - (e[0] - b[0]) / 6} ${c[1] - (e[1] - b[1]) / 6} ${c}`;
}
let last = pts[pts.length - 1];
RIPPLE.forEach(([t, w]) => {
  const p = [px(t), py(w)], h = (p[0] - last[0]) * .38;
  d += `C${last[0] + h} ${last[1]} ${p[0] - h} ${p[1]} ${p}`;
  last = p;
});
const clip = add(plot, 'clipPath', { id: 'plot-area' });
add(clip, 'rect', { x: 146, y: 90, width: 893, height: 648 });
add(plot, 'path', { class: 'curve', d, 'clip-path': 'url(#plot-area)' });
```
